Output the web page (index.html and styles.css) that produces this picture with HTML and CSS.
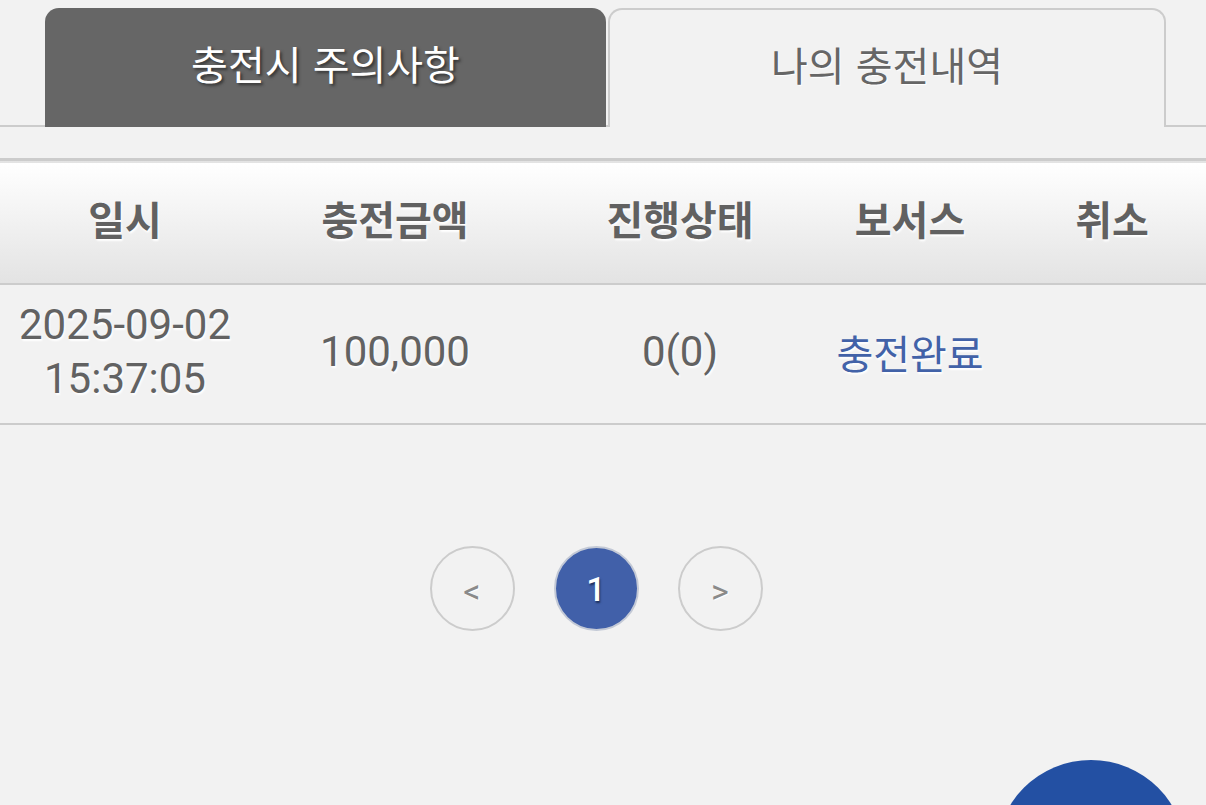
FILE: index.html
```html
<!DOCTYPE html>
<html lang="ko">
<head>
<meta charset="utf-8">
<title>충전내역</title>
<link rel="stylesheet" href="styles.css">
</head>
<body>
<div class="page">
  <div class="tabs">
    <div class="tab tab-active">충전시 주의사항</div>
    <div class="tab tab-idle">나의 충전내역</div>
  </div>
  <table class="list">
    <thead>
      <tr>
        <th class="c1">일시</th>
        <th class="c2">충전금액</th>
        <th class="c3">진행상태</th>
        <th class="c4">보서스</th>
        <th class="c5">취소</th>
      </tr>
    </thead>
    <tbody>
      <tr>
        <td class="c1">2025-09-02<br>15:37:05</td>
        <td class="c2">100,000</td>
        <td class="c3">0(0)</td>
        <td class="c4 done">충전완료</td>
        <td class="c5"></td>
      </tr>
    </tbody>
  </table>
  <div class="pager">
    <span class="pg">&lt;</span>
    <span class="pg pg-on">1</span>
    <span class="pg">&gt;</span>
  </div>
</div>
<div class="fab"></div>
</body>
</html>
```

FILE: styles.css
```css
html, body {
  margin: 0;
  padding: 0;
  background: #f2f2f2;
  overflow: hidden;
  width: 1206px;
  height: 805px;
}
body {
  font-family: Roboto, "Noto Sans CJK KR", sans-serif;
  color: #636363;
}
.page {
  padding-top: 8px;
}
.tabs {
  display: flex;
  align-items: flex-end;
  padding-left: 45px;
  gap: 2px;
  border-bottom: 2px solid #cccccc;
  box-sizing: border-box;
  height: 119px;
}
.tab {
  height: 119px;
  box-sizing: border-box;
  display: flex;
  align-items: center;
  justify-content: center;
  padding-bottom: 10px;
  font-family: "Noto Sans CJK KR", sans-serif;
  font-size: 40px;
  border-radius: 14px 14px 0 0;
  margin-bottom: -2px;
}
.tab-active {
  width: 561px;
  background: #666666;
  color: #ffffff;
  text-shadow: 2px 2px 3px #333333;
}
.tab-idle {
  width: 558px;
  background: #f2f2f2;
  border: 2px solid #cccccc;
  border-bottom: none;
  color: #666666;
  text-shadow: 1px 1px 1px #ffffff;
}
.list {
  margin-top: 31px;
  width: 1206px;
  border-collapse: collapse;
  table-layout: fixed;
}
.list th, .list td {
  padding: 0;
  text-align: center;
  text-shadow: 1px 2px 2px #ffffff;
}
.list thead tr {
  background: linear-gradient(#ffffff, #e3e3e3);
  border-top: 3px solid #cccccc;
  border-bottom: 2px solid #cccccc;
}
.list th {
  height: 114px;
  font-family: "Noto Sans CJK KR", sans-serif;
  font-weight: bold;
  font-size: 40px;
  color: #616161;
  padding-bottom: 8px;
}
.list tbody tr {
  border-bottom: 2px solid #cccccc;
}
.list td {
  height: 134px;
  font-size: 42px;
  line-height: 54px;
  color: #626262;
  padding-bottom: 4px;
}
.c1 { width: 250px; }
.c2 { width: 290px; }
.c3 { width: 280px; }
.c4 { width: 180px; }
.c5 { width: 206px; }
.list .c5 { padding-left: 9px; }
.list td.done {
  color: #4262a8;
  font-family: "Noto Sans CJK KR", sans-serif;
  font-size: 40px;
}
.pager {
  display: flex;
  justify-content: center;
  gap: 39px;
  margin-top: 121px;
  padding-right: 14px;
}
.pg {
  width: 85px;
  height: 85px;
  box-sizing: border-box;
  border: 2px solid #cccccc;
  border-radius: 50%;
  display: flex;
  align-items: center;
  justify-content: center;
  font-size: 34px;
  padding-top: 4px;
  color: #8a8a8a;
  text-shadow: 1px 1px 1px #ffffff;
}
.pg-on {
  background: #4160a9;
  border-color: #c3c9d6;
  color: #ffffff;
  font-size: 34px;
  font-weight: 500;
  padding-top: 0;
  text-shadow: 1px 2px 2px #1e2f5a;
}
.fab {
  position: fixed;
  left: 996px;
  top: 760px;
  width: 190px;
  height: 190px;
  border-radius: 50%;
  background: #2350a3;
}
```
